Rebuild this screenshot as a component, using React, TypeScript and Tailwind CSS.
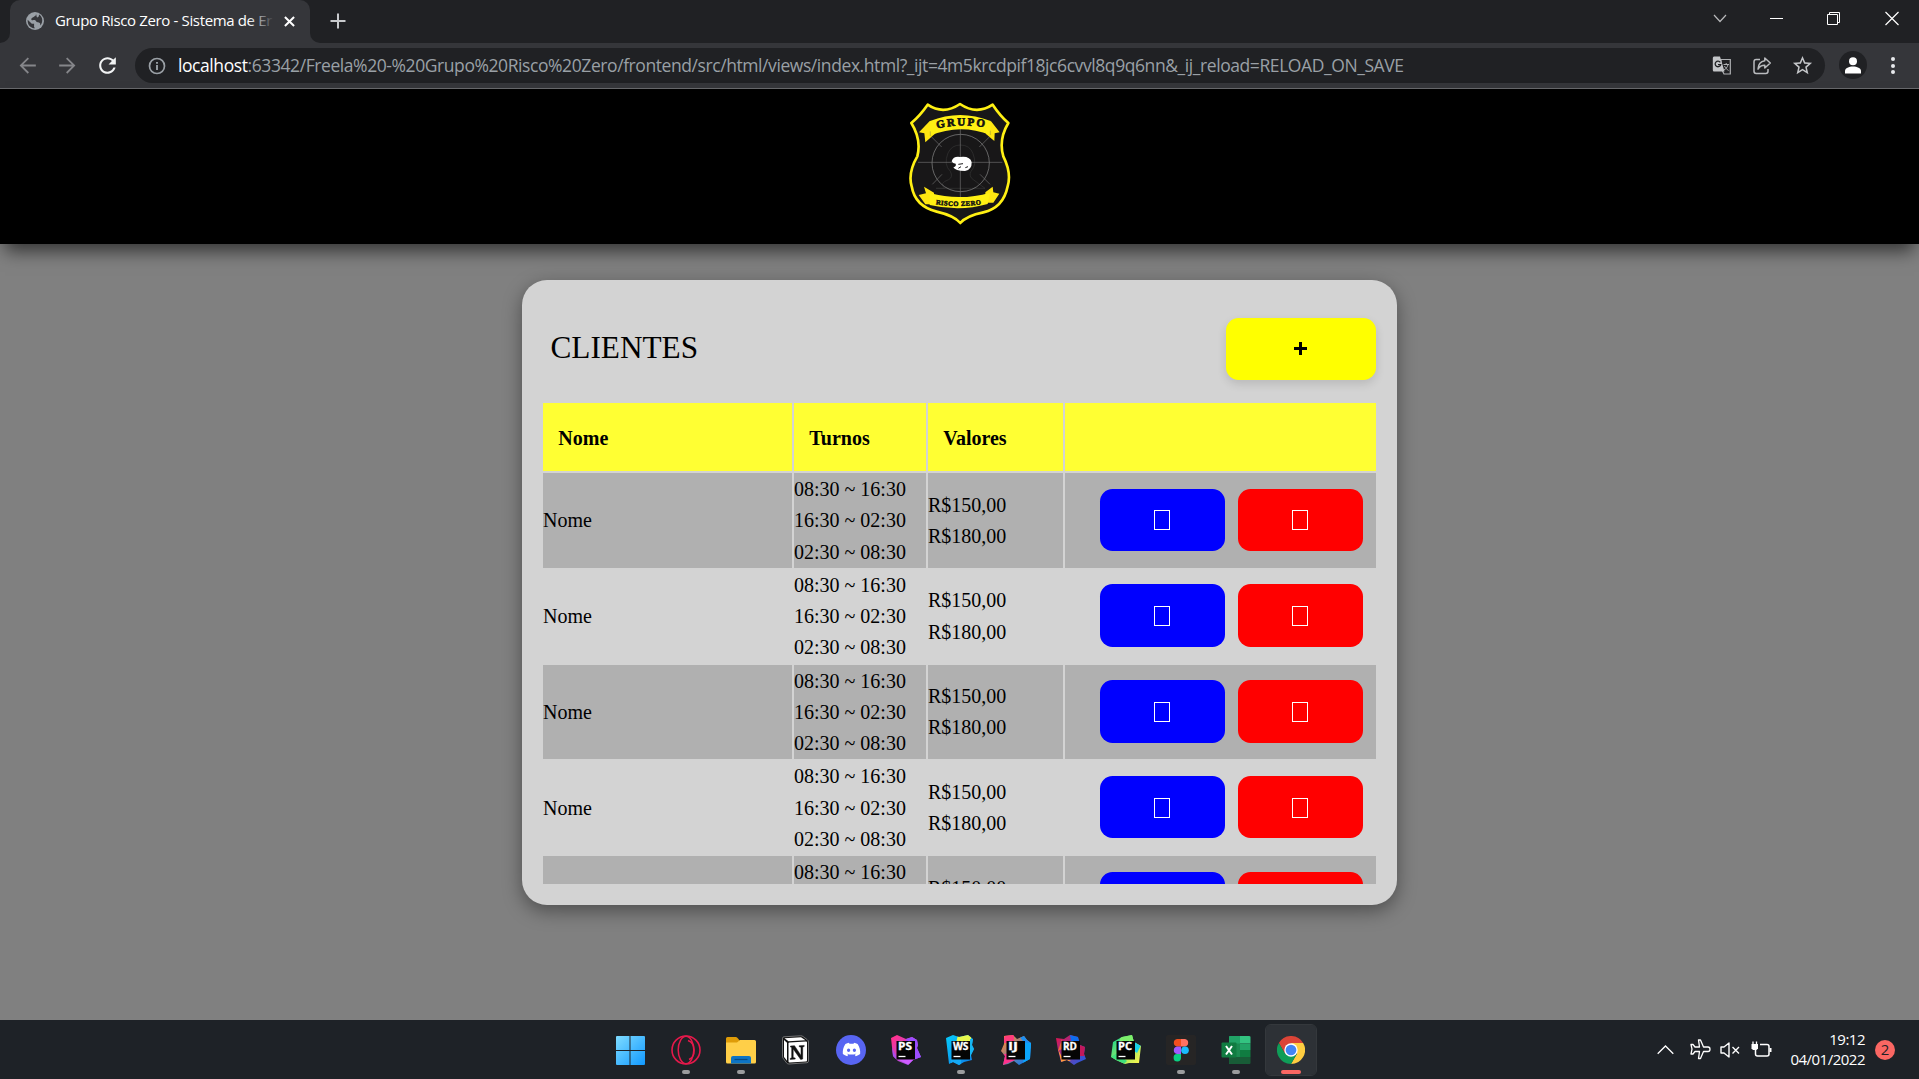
import React from "react";
import { FaDiscord } from "react-icons/fa6";

const UI = "font-['Open_Sans','Noto_Sans',sans-serif]";
const SERIF = "font-['Liberation_Serif','Times_New_Roman',serif]";

function TabStrip() {
  return (
    <div className="flex h-[43px] bg-[#202124]">
      <div className="flex w-[10px] items-end bg-[#35363a]">
        <div className="h-full w-full rounded-br-[10px] bg-[#202124]" />
      </div>
      <div className="flex w-[300px] items-center rounded-t-[10px] bg-[#35363a] pl-[14px] pb-[1px]">
        <svg className="size-[22px] shrink-0" viewBox="0 0 24 24">
          <circle cx="12" cy="12" r="9.800" fill="#9aa0a6" />
          <path d="M4 10.500l4.500 4.500h2.500v3.500l1 1.500C7.500 20 4 16.500 4 12zM13 4c.5 2-1 2.500-2.500 3.500C9 8.500 7.500 9 8 10.500c1 1.500 4-.5 5 1.500s3 1 4.500 2.500l.5 2.500c3-4 2.500-9.500-1.500-12-.5 1.500 0 2.500-1.500 3C13.500 8.500 14 6 13 4z" fill="#35363a" />
        </svg>
        <div className={`${UI} relative ml-[9px] w-[219px] shrink-0 overflow-hidden whitespace-nowrap pb-[3px] text-[15px] leading-[20px] tracking-[-0.36px] text-white`}>
          Grupo Risco Zero - Sistema de Er
          <div className="absolute inset-y-0 right-0 w-[26px] bg-linear-to-r from-transparent to-[#35363a]" />
        </div>
        <svg className="ml-[10px] size-[11px] shrink-0" viewBox="0 0 12 12" stroke="#fff" strokeWidth="2.200">
          <path d="M1 1l10 10M11 1L1 11" />
        </svg>
      </div>
      <div className="flex w-[10px] bg-[#35363a]">
        <div className="h-full w-full rounded-bl-[10px] bg-[#202124]" />
      </div>
      <div className="flex w-[35px] items-center justify-center pb-[1px]">
        <svg className="size-[16px]" viewBox="0 0 16 16" stroke="#c8cacd" strokeWidth="2">
          <path d="M8 0.500v15M0.500 8h15" />
        </svg>
      </div>
      <div className="ml-auto flex pt-[11px]">
        <svg className="mr-[43px] h-[16px] w-[14px]" viewBox="0 0 14 16" fill="none" stroke="#b8b9bb" strokeWidth="1.200">
          <path d="M1 4l6 6.500L13 4" />
        </svg>
        <svg className="mr-[43px] h-[16px] w-[14px]" viewBox="0 0 14 16" stroke="#fff">
          <path d="M0 7.500h13" />
        </svg>
        <svg className="mr-[44px] h-[16px] w-[14px]" viewBox="0 0 14 16" fill="none" stroke="#fff">
          <path d="M0.500 3.500h10v10h-10zM2.500 3.500v-2h10v10h-2" />
        </svg>
        <svg className="mr-[20px] h-[16px] w-[14px]" viewBox="0 0 14 16" stroke="#fff" strokeWidth="1.200">
          <path d="M0.500 1l13 13M13.500 1l-13 13" />
        </svg>
      </div>
    </div>
  );
}

function Toolbar() {
  return (
    <div className="flex h-[46px] items-start border-b border-[#68696c] bg-[#35363a] pt-[5px]">
      <div className="flex h-[35px] w-[135px] items-center pb-[1px] pl-[15px]">
        <svg className="size-[25px]" viewBox="0 0 24 24" fill="#85868a">
          <path d="M20 11.100H7.830l5.590-5.690L12.200 4.200 4.400 12l7.800 7.800 1.210-1.210L7.830 12.900H20z" />
        </svg>
        <svg className="ml-[15px] size-[25px]" viewBox="0 0 24 24" fill="#85868a">
          <path d="M4 11.100h12.170l-5.590-5.690L11.800 4.200l7.800 7.800-7.800 7.800-1.210-1.210 5.580-5.690H4z" />
        </svg>
        <svg className="ml-[15px] size-[25px]" viewBox="0 0 24 24" fill="#f1f3f4">
          <path d="M17.650 6.350C16.200 4.900 14.210 4 12 4c-4.420 0-7.990 3.580-7.990 8s3.570 8 7.990 8c3.730 0 6.840-2.550 7.730-6h-2.080c-.82 2.330-3.040 4-5.650 4-3.310 0-6-2.690-6-6s2.690-6 6-6c1.660 0 3.140.69 4.220 1.780L13 11h7V4l-2.350 2.350z" />
        </svg>
      </div>
      <div className="flex h-[35px] w-[1690px] items-center rounded-full bg-[#202124] pl-[13px] pr-[12px]">
        <svg className="size-[18px]" viewBox="0 0 18 18" fill="none" stroke="#9aa0a6" strokeWidth="1.700">
          <circle cx="9" cy="9" r="7.500" />
          <path d="M9 8v5M9 5v1.700" strokeWidth="1.900" />
        </svg>
        <div className={`${UI} ml-[12px] whitespace-nowrap pb-[2px] text-[17.5px] leading-[26px] tracking-[-0.42px] text-[#9aa0a6]`}>
          <span className="text-white">localhost</span>
          :63342/Freela%20-%20Grupo%20Risco%20Zero/frontend/src/html/views/index.html?_ijt=4m5krcdpif18jc6cvvl8q9q6nn&amp;_ij_reload=RELOAD_ON_SAVE
        </div>
        <div className="ml-auto flex items-center gap-[20px]">
          <svg className="h-[20px] w-[20px]" viewBox="0 0 20 20">
            <path d="M9 3.500h9.300v14.500H12L9 12z" fill="none" stroke="#aeb0b3" strokeWidth="1.200" />
            <path d="M11.500 8.500h5.500M14.200 7v1.500M16 8.500c-.5 3-2.500 4.500-4 5.500M12.500 10c.8 1.800 2.200 3.200 4 4.500" fill="none" stroke="#aeb0b3" strokeWidth="1" />
            <path d="M2 0.500h6l4.500 15H2Q0.800 15.500 0.800 14V2Q0.800 0.500 2 0.500z" fill="#c3c5c8" />
            <path d="M8.300 6.400A2.800 2.800 0 1 0 8.700 8.600H6" fill="none" stroke="#202124" strokeWidth="1.300" />
          </svg>
          <svg className="size-[20px]" viewBox="0 0 20 20" fill="none" stroke="#b9bbbe" strokeWidth="1.500">
            <path d="M8 3.500H4.200Q2 3.500 2 5.700v9.600q0 2.200 2.200 2.200h9.600q2.200 0 2.200-2.200V13" />
            <path d="M12.800 2l5.500 5-5.500 5V9.200C9.500 9.200 7.500 10.500 6 13c.3-4.500 3-7.600 6.800-8.200z" strokeLinejoin="round" />
          </svg>
          <svg className="size-[23px] -mx-[1px]" viewBox="0 0 24 24" fill="#c3c5c8">
            <path d="M22 9.240l-7.190-.62L12 2 9.190 8.630 2 9.240l5.460 4.730L5.820 21 12 17.270 18.180 21l-1.630-7.030L22 9.240zM12 15.400l-3.760 2.270 1-4.280-3.320-2.880 4.380-.38L12 6.100l1.710 4.040 4.380.38-3.320 2.880 1 4.280L12 15.400z" />
          </svg>
        </div>
      </div>
      <div className="ml-[14px] mt-[3px] flex size-[28px] items-center justify-center rounded-full bg-[#202124]">
        <svg className="h-[17px] w-[16px]" viewBox="0 0 16 17" fill="#fff">
          <circle cx="8" cy="4.300" r="4" />
          <path d="M0 16.500V14c0-3 4-4.500 8-4.500s8 1.500 8 4.500v2.500z" />
        </svg>
      </div>
      <div className="ml-[23.500px] mt-[9px] flex flex-col gap-[2.500px]">
        <div className="size-[4px] rounded-full bg-[#e8eaed]" />
        <div className="size-[4px] rounded-full bg-[#e8eaed]" />
        <div className="size-[4px] rounded-full bg-[#e8eaed]" />
      </div>
    </div>
  );
}

function Badge() {
  return (
    <svg className="mt-[13px] h-[123px] w-[102px]" viewBox="57 37 306 369">
      <path
        d="M113 45Q160 77 210 43Q260 77 308 45Q330 78 355 100Q325 150 340 200Q365 250 353 290Q340 355 280 368Q230 378 211 400Q192 378 140 366Q75 350 65 290Q53 250 82 200Q95 150 64 100Q90 78 113 45z"
        fill="#181718" stroke="#fff013" strokeWidth="8" strokeLinejoin="round"
      />
      <path d="M138 296h26Q146 280 176 270Q190 262 181 245Q160 225 174 190Q185 166 211 166Q240 166 249 192Q262 225 243 245Q235 260 250 270L285 296z" fill="none" stroke="#353535" strokeWidth="2" />
      <circle cx="212" cy="220" r="86" fill="none" stroke="#8d8d8d" strokeWidth="2" />
      <path d="M211 113v212M84 218h253M125 142l30 30M298 142l-30 30M127 284l29-30M300 284l-30-30" stroke="#777" strokeWidth="1.800" />
      <path d="M185 215Q190 199 210 202Q240 198 245 218Q246 240 225 244Q195 244 190 233Q200 230 197 222Q188 222 185 215z" fill="#fff" />
      <path d="M205 224l14-2M205 236l8-5M226 234l8-3" stroke="#181718" strokeWidth="3" fill="none" />
      <path d="M120 93L87 128l16 3 3 27 28-25zM302 93l27 35-15 3-1 23-26-22z" fill="#ffe611" />
      <path d="M120 94Q210 58 302 94L301 136Q210 100 120 138z" fill="#fff013" />
      <path d="M121 125v14M301 123v13" stroke="#555" strokeWidth="1" />
      <path d="M102 291L108 311 86 316l20 28h26V309zM308 291l2 17 18 4-18 27h-24v-31z" fill="#ffe611" />
      <path d="M119 310Q210 335 300 309L293 343Q210 367 119 346z" fill="#fff013" />
      <path id="topArc" d="M141 117Q213 98 300 116" fill="none" />
      <path id="bottomArc" d="M137 344Q210 355 290 341" fill="none" />
      <text fill="#111" fontFamily="Liberation Serif" fontWeight="700" fontSize="33" stroke="#111" strokeWidth="2" letterSpacing="6">
        <textPath href="#topArc">GRUPO</textPath>
      </text>
      <text fill="#111" fontFamily="Liberation Serif" fontWeight="700" fontSize="20" stroke="#111" strokeWidth="1.500" letterSpacing="1.300">
        <textPath href="#bottomArc">RISCO ZERO</textPath>
      </text>
    </svg>
  );
}

const SHIFTS = ["08:30 ~ 16:30", "16:30 ~ 02:30", "02:30 ~ 08:30"];
const PRICES = ["R$150,00", "R$180,00"];

function ActionButton({ color }: { color: string }) {
  return (
    <button className={`flex h-[62.500px] w-[125px] items-center justify-center rounded-[12.500px] pr-[1px] pt-[1px] ${color}`}>
      <span className="h-[20px] w-[16px] border border-white" />
    </button>
  );
}

function Row({ shaded }: { shaded: boolean }) {
  const cell = shaded ? "bg-[#b0b0b0]" : "";
  return (
    <div className="grid h-[93.750px] shrink-0 grid-cols-[249px_132px_135px_311px] gap-x-[2px] leading-[31.250px]">
      <div className={`flex items-center pt-[1px] ${cell}`}>Nome</div>
      <div className={`flex flex-col justify-center pt-[1px] ${cell}`}>
        {SHIFTS.map((s) => <div key={s}>{s}</div>)}
      </div>
      <div className={`flex flex-col justify-center pt-[1px] ${cell}`}>
        {PRICES.map((p) => <div key={p}>{p}</div>)}
      </div>
      <div className={`flex items-center justify-end gap-[13px] pb-[1px] pr-[13px] ${cell}`}>
        <ActionButton color="bg-[#0000ff]" />
        <ActionButton color="bg-[#ff0000]" />
      </div>
    </div>
  );
}

function ClientsCard() {
  return (
    <section className={`${SERIF} ml-[522.300px] mt-[36px] h-[625px] w-[875px] rounded-[25px] bg-[#d3d3d3] pl-[20.700px] pr-[21.700px] pt-[37.500px] text-[20px] text-black shadow-[0_6px_19px_rgba(0,0,0,0.4)]`}>
      <div className="flex h-[62.500px] items-center justify-between pl-[7.500px]">
        <h1 className="text-[31.250px]">CLIENTES</h1>
        <button className="flex h-full w-[150px] items-center justify-center rounded-[12.500px] bg-[#ffff00] pb-[1px] shadow-[0_4px_10px_rgba(0,0,0,0.12)]">
          <svg className="size-[13px]" viewBox="0 0 13 13" stroke="#000" strokeWidth="3">
            <path d="M6.500 0v13M0 6.500h13" />
          </svg>
        </button>
      </div>
      <div className="mt-[23px] flex h-[480.500px] flex-col gap-[2px] overflow-hidden">
        <div className="grid h-[68px] shrink-0 grid-cols-[249px_132px_135px_311px] gap-x-[2px] font-bold">
          {["Nome", "Turnos", "Valores", ""].map((h, i) => (
            <div key={i} className="flex items-center bg-[#ffff33] pl-[15.300px] pt-[1px]">{h}</div>
          ))}
        </div>
        {[0, 1, 2, 3, 4].map((i) => <Row key={i} shaded={i % 2 === 0} />)}
      </div>
    </section>
  );
}

function WindowsLogo() {
  return (
    <svg className="size-[30px]" viewBox="1 0 30 30">
      <defs>
        <linearGradient id="win" x1="0" y1="0" x2="1" y2="1">
          <stop offset="0" stopColor="#7fdcff" />
          <stop offset="1" stopColor="#1199ff" />
        </linearGradient>
      </defs>
      <path d="M1 2q0-1 1-1h12.500v14H1zM15.500 1H29q1 0 1 1v13H15.500zM1 16h13.500v14H2q-1 0-1-1zM15.500 16H30v13q0 1-1 1H15.500z" fill="url(#win)" />
    </svg>
  );
}

function OperaLogo() {
  return (
    <svg className="size-[30px]" viewBox="0 0 30 30" fill="none" stroke="#e5194b">
      <circle cx="15" cy="15" r="14" strokeWidth="1.600" />
      <ellipse cx="15" cy="15" rx="7.800" ry="13.700" strokeWidth="1.500" />
      <path d="M17 5.500c8 3 8 16 1 19" strokeWidth="1.400" />
    </svg>
  );
}

function FolderLogo() {
  return (
    <svg className="size-[30px]" viewBox="0 0 30 30">
      <path d="M0 3.500Q0 2 1.500 2H10q1 0 2 1.500L14 6v6H0z" fill="#df9c08" />
      <path d="M0 7.500h11L14 5h14.500Q30 5 30 6.500V27q0 1.500-1.500 1.500h-27Q0 28.500 0 27z" fill="#ffcf48" />
      <path d="M5 28.500V23q0-2 2-2h16q2 0 2 2v5.500z" fill="#0d74c4" />
      <path d="M8.500 24.500h13" stroke="#064a84" strokeWidth="1.200" />
    </svg>
  );
}

function NotionLogo() {
  return (
    <svg className="size-[30px]" viewBox="1 0 30 30">
      <path d="M2.500 3.200Q2.500 2 4 1.800L20.500 0.800Q22 0.700 23 1.500l4 3Q28.500 5.500 28.500 7v19q0 1.500-1.500 1.700L9 29q-1.500 0-2.500-1.200l-3.200-4.300q-.8-1-.8-2.300z" fill="#111" stroke="#999" strokeWidth=".7" />
      <path d="M4.500 3.200L21 2.200l4.500 3L8.500 6.300z" fill="#fff" />
      <path d="M4 5l3 2.800v18L4 22z" fill="#fff" />
      <path d="M8.500 8.500Q8.500 7.600 9.500 7.500l16.500-1q1 0 1 1v18q0 .9-1 1L9.700 27.500Q8.500 27.500 8.500 26.500z" fill="#fff" />
      <path d="M10.500 11l4-.3 6.500 9.800v-8.300l-1.800-.5v-1l5-.3v1l-1.500.6v12l-2 .5-7.500-10.500v8.600l2 .5v1l-5 .3v-1l1.500-.6V12.500l-1.200-.5z" fill="#111" stroke="#111" strokeWidth=".5" />
    </svg>
  );
}

function DiscordLogo() {
  return (
    <div className="flex size-[30px] items-center justify-center rounded-full bg-[#5865f2]">
      <FaDiscord className="size-[19px] text-white" />
    </div>
  );
}

type Facet = { d: string; fill: string };
type Brand = { label: string; a: string; d: string; shape: string; facets: Facet[] };

function JetBrainsLogo({ label, a, d, shape, facets }: Brand) {
  return (
    <svg className="size-[30px]" viewBox="0 0 30 30">
      <defs>
        <clipPath id={`clip-${label}`}><path d={shape} /></clipPath>
        <linearGradient id={`grad-${label}`} x1="0" y1="0" x2="1" y2="1">
          <stop offset=".1" stopColor={a} />
          <stop offset=".9" stopColor={d} />
        </linearGradient>
      </defs>
      <g clipPath={`url(#clip-${label})`}>
        <path d="M0 0h30v30H0z" fill={`url(#grad-${label})`} />
        {facets.map((f) => <path key={f.d} d={f.d} fill={f.fill} />)}
      </g>
      <path d="M5.500 6h18.500v18.500H5.500z" fill="#050505" />
      <text
        x="7" y="15.200" fill="#fff" stroke="#fff" strokeWidth=".3" fontFamily="Open Sans" fontWeight="700" fontSize="10.500"
        textLength={label === "WS" ? 15.500 : label === "IJ" ? 10 : 14} lengthAdjust="spacingAndGlyphs"
      >
        {label}
      </text>
      <path d="M7.500 21.500H14.500" stroke="#fff" strokeWidth="1.300" />
    </svg>
  );
}

const BRANDS: Brand[] = [
  {
    label: "PS", a: "#ff3290", d: "#8e57ff",
    shape: "M0 3L6 0l9 4 6-2 5 3 1 5-1 3 4 9-8 3-5 5-10-4-5-5z",
    facets: [{ d: "M14 0h16v30H22z", fill: "#9b4dff" }, { d: "M0 10l6 14-5 2z", fill: "#a94ff0" }, { d: "M6 24h18l-6 6z", fill: "#cf5cff" }],
  },
  {
    label: "WS", a: "#07c3f8", d: "#0d80ea",
    shape: "M0 3l7-3 6 2 9-2 5 4-1 6 2 4-3 6 1 5-8 2-5 3-6-3-4 2z",
    facets: [{ d: "M12 0h14l-2 8H10z", fill: "#e8f94d" }, { d: "M24 4l6 0v12l-6 6z", fill: "#16b6f2" }, { d: "M5 24h10v6H5z", fill: "#15a9f5" }],
  },
  {
    label: "IJ", a: "#ff8734", d: "#087cf5",
    shape: "M3 1l9-1 4 4 7-3 3 4 4 3-1 16-11 6-5-4-6 3-5 1 2-9-4-5 3-7z",
    facets: [{ d: "M4 0h9v8H2z", fill: "#ff3c7c" }, { d: "M17 0h13v14l-8-8z", fill: "#1c8ff2" }, { d: "M24 8l6 0v16l-8 6z", fill: "#0ba5fb" }, { d: "M0 20l8-2 6 7-12 5z", fill: "#ff318c" }],
  },
  {
    label: "RD", a: "#d51857", d: "#2b58e0",
    shape: "M0 3l8 1 6-4 8 2 2 8 5 2-1 7 2 5-9 4-3 2-7-5-6 2-3-12z",
    facets: [{ d: "M14 0h8l3 12-10-6z", fill: "#0d6df0" }, { d: "M24 9l6 2v10l-6 0z", fill: "#c2185b" }, { d: "M2 14l5 10 8 1-9 5z", fill: "#ff9a3c" }, { d: "M6 4l-4 12 4-2z", fill: "#f26a3c" }],
  },
  {
    label: "PC", a: "#21d789", d: "#f4f54e",
    shape: "M2 7l9-5 10-2 2 7 7 4-2 17-10 0-4 1-9-4-5-3z",
    facets: [{ d: "M10 0h12l2 8H8z", fill: "#7df06b" }, { d: "M23 6l7 4-4 8-3-2z", fill: "#18d2e8" }, { d: "M0 22l6-4 10 8-4 4z", fill: "#3fe07c" }],
  },
];

function FigmaLogo() {
  return (
    <svg className="size-[30px]" viewBox="0 0 30 30">
      <rect width="30" height="30" rx="2" fill="#262525" />
      <path d="M15 4h-4a3.800 3.800 0 0 0 0 7.500h4z" fill="#f24e1e" />
      <path d="M15 4h4a3.800 3.800 0 0 1 0 7.500h-4z" fill="#ff7262" />
      <path d="M15 11.500h-4a3.800 3.800 0 0 0 0 7.500h4z" fill="#a259ff" />
      <circle cx="19" cy="15.200" r="3.800" fill="#1abcfe" />
      <path d="M15 19h-4a3.700 3.700 0 1 0 4 3.700z" fill="#0acf83" />
    </svg>
  );
}

function ExcelLogo() {
  return (
    <svg className="size-[30px]" viewBox="0 0 30 30">
      <path d="M8 2q0-1 1-1h10v28H9q-1 0-1-1z" fill="#1b8a50" />
      <path d="M8 2q0-1 1-1h10v7.500H8z" fill="#21a366" />
      <path d="M19 1h9q1.500 0 1.500 1v6.500H19z" fill="#33c481" />
      <path d="M19 8.500h10.500V15H19z" fill="#21a366" />
      <path d="M19 15h10.500v7H19z" fill="#107c41" />
      <path d="M8 22h21.500v6q0 1-1 1H9q-1 0-1-1z" fill="#185c37" />
      <rect x="0.500" y="7.500" width="15" height="15" rx="1" fill="#107c41" />
      <path d="M5 11l6 8.500M11 11l-6 8.500" stroke="#fff" strokeWidth="2" />
    </svg>
  );
}

function ChromeLogo() {
  return (
    <svg className="size-[28px]" viewBox="0 0 48 48">
      <path d="M44.800 12A24 24 0 0 1 24 48L34.400 30 24 12z" fill="#ffcd40" />
      <path d="M3.200 12A24 24 0 0 1 44.800 12H24L13.600 30z" fill="#db4437" />
      <path d="M3.200 12L13.600 30 24 35 34.400 30 24 48A24 24 0 0 1 3.200 12z" fill="#0f9d58" />
      <circle cx="24" cy="24" r="11.500" fill="#fff" />
      <circle cx="24" cy="24" r="9.200" fill="#4285f4" />
    </svg>
  );
}

const APPS: { icon: React.ReactNode; mark?: "open" | "active" }[] = [
  { icon: <WindowsLogo /> },
  { icon: <OperaLogo />, mark: "open" },
  { icon: <FolderLogo />, mark: "open" },
  { icon: <NotionLogo /> },
  { icon: <DiscordLogo /> },
  { icon: <JetBrainsLogo {...BRANDS[0]} /> },
  { icon: <JetBrainsLogo {...BRANDS[1]} />, mark: "open" },
  { icon: <JetBrainsLogo {...BRANDS[2]} /> },
  { icon: <JetBrainsLogo {...BRANDS[3]} /> },
  { icon: <JetBrainsLogo {...BRANDS[4]} /> },
  { icon: <FigmaLogo />, mark: "open" },
  { icon: <ExcelLogo />, mark: "open" },
  { icon: <ChromeLogo />, mark: "active" },
];

function Taskbar() {
  return (
    <footer className="flex h-[59px] bg-[#1e2227] pl-[606px]">
      <div className="flex gap-[5px] pt-[5px]">
        {APPS.map((app, i) => (
          <div
            key={i}
            className={`flex h-[50px] w-[50px] flex-col items-center rounded-[5px] ${app.mark === "active" ? "bg-[#2d3136] outline outline-[#34383c]" : ""}`}
          >
            <div className="flex h-[45px] items-center pt-[4px]">{app.icon}</div>
            {app.mark === "open" && <div className="h-[4px] w-[8px] rounded-full bg-[#9b9c9e]" />}
            {app.mark === "active" && <div className="h-[4px] w-[20px] rounded-full bg-[#fa6763]" />}
          </div>
        ))}
      </div>
      <div className="ml-auto flex items-center pr-[24px]">
        <svg className="h-[10px] w-[17px]" viewBox="0 0 17 10" fill="none" stroke="#fff" strokeWidth="1.300">
          <path d="M0.700 8.800l7.800-7.800 7.800 7.800" />
        </svg>
        <svg className="ml-[16px] size-[21px]" viewBox="0 0 21 21" fill="none" stroke="#fff" strokeWidth="1.300" strokeLinejoin="round">
          <path d="M8.500 1h2l3 7H18q2 0 2 2.200T18 12.500h-4.500l-3 7h-2l1-7H5l-2 2.500H1l1-4.800L1 5.500h2L5 8h4.500z" />
        </svg>
        <svg className="ml-[9px] h-[18px] w-[21px]" viewBox="0 0 21 18" fill="none" stroke="#fff" strokeWidth="1.400">
          <path d="M1 6h3l5-4v14l-5-4H1z" strokeLinejoin="round" />
          <path d="M12.500 6l6.500 6.500M19 6l-6.500 6.500" />
        </svg>
        <svg className="ml-[10px] h-[18px] w-[22px]" viewBox="0 0 22 18" fill="none" stroke="#fff" strokeWidth="1.500">
          <path d="M9 3.500h7q2 0 2 2v7.500q0 2-2 2H6.500q-2 0-2-2V9" />
          <path d="M0.500 3h6.500v4.500L5.500 9h-3.500L0.500 7.500z" fill="#fff" stroke="none" />
          <path d="M2 0.500v3M5.500 0.500v3" strokeWidth="1.300" />
          <path d="M19.500 7v4" strokeWidth="2" />
        </svg>
        <div className={`${UI} ml-[14px] w-[78px] pb-[1px] text-right text-[15px] leading-[20px] tracking-[-0.5px] text-white`}>
          <div>19:12</div>
          <div>04/01/2022</div>
        </div>
        <div className={`${UI} ml-[10px] flex size-[20px] items-center justify-center rounded-full bg-[#fa6763] text-[15px] leading-none text-[#1e2227]`}>2</div>
      </div>
    </footer>
  );
}

export default function App() {
  return (
    <div className="flex h-[1079px] w-[1919px] flex-col overflow-hidden bg-[#808080]">
      <TabStrip />
      <Toolbar />
      <main className="h-[931px] bg-[#808080]">
        <header className="flex h-[155px] justify-center bg-black shadow-[0_12px_17px_-5px_rgba(0,0,0,0.6)]">
          <Badge />
        </header>
        <ClientsCard />
      </main>
      <Taskbar />
    </div>
  );
}
